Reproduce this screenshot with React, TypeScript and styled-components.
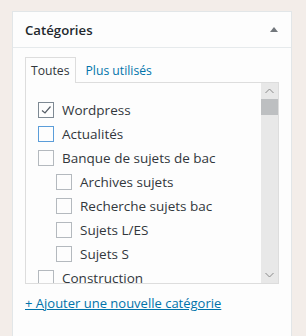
import styled, { createGlobalStyle } from "styled-components";

const GlobalStyle = createGlobalStyle`
  body {
    margin: 0;
    background: #f3ede9;
    font-family: "Open Sans", "Noto Sans", sans-serif;
    color: #32373c;
  }
`;

const Page = styled.div`
  padding: 11px 14px 0 12px;
  height: 336px;
  box-sizing: border-box;
  overflow: hidden;
`;

const Panel = styled.div`
  width: 280px;
  height: 340px;
  box-sizing: border-box;
  background: #fdfdfd;
  border: 1px solid #e2e6e8;
`;

const Header = styled.div`
  display: flex;
  align-items: center;
  justify-content: space-between;
  height: 35px;
  padding: 0 13px 0 12px;
  border-bottom: 1px solid #e6eaec;
`;

const Title = styled.h2`
  margin: 0;
  font-size: 13.2px;
  font-weight: 600;
  color: #23282d;
`;

const Toggle = styled.span`
  width: 0;
  height: 0;
  border-left: 4px solid transparent;
  border-right: 4px solid transparent;
  border-bottom: 5px solid #72777c;
`;

const Body = styled.div`
  padding: 9px 12px 0 12px;
`;

const Tabs = styled.div`
  display: flex;
  align-items: flex-end;
`;

const Tab = styled.div<{ $active?: boolean }>`
  height: 26px;
  box-sizing: border-box;
  padding: 0 5px;
  display: flex;
  align-items: center;
  font-size: 12.2px;
  color: ${({ $active }) => ($active ? "#32373c" : "#0073aa")};
  border: 1px solid ${({ $active }) => ($active ? "#dddddd" : "transparent")};
  border-bottom: none;
  background: ${({ $active }) => ($active ? "#fdfdfd" : "transparent")};
  margin-bottom: -1px;
  margin-right: 4px;
`;

const ListBox = styled.div`
  display: flex;
  height: 202px;
  box-sizing: border-box;
  border: 1px solid #dddddd;
  background: #fdfdfd;
  width: 254px;
`;

const List = styled.ul`
  flex: 1;
  margin: 0;
  padding: 15px 0 0 12px;
  list-style: none;
  overflow: hidden;
`;

const Item = styled.li<{ $level?: number }>`
  display: flex;
  align-items: center;
  gap: 8px;
  height: 24px;
  padding-left: ${({ $level }) => ($level ?? 0) * 18}px;
  font-size: 13.5px;
  color: #32373c;
  white-space: nowrap;
`;

const Box = styled.span<{ $checked?: boolean; $focus?: boolean }>`
  flex: none;
  width: 16px;
  height: 16px;
  box-sizing: border-box;
  background: #fdfdfd;
  border: 1px solid
    ${({ $checked, $focus }) => ($focus ? "#5b9dd9" : $checked ? "#7e8993" : "#b4b9be")};
  display: flex;
  align-items: center;
  justify-content: center;
`;

const Scrollbar = styled.div`
  flex: none;
  width: 17px;
  background: #e8e8e8;
  display: flex;
  flex-direction: column;
`;

const Arrow = styled.div`
  height: 16px;
  display: flex;
  align-items: center;
  justify-content: center;
`;

const Thumb = styled.div`
  height: 16px;
  background: #bdbfc1;
`;

const Spacer = styled.div`
  flex: 1;
`;

const AddLink = styled.a`
  display: inline-block;
  margin-top: 10px;
  font-size: 13px;
  color: #0073aa;
  text-decoration: underline;
`;

const items = [
  { label: "Wordpress", level: 0, checked: true },
  { label: "Actualités", level: 0, focus: true },
  { label: "Banque de sujets de bac", level: 0 },
  { label: "Archives sujets", level: 1 },
  { label: "Recherche sujets bac", level: 1 },
  { label: "Sujets L/ES", level: 1 },
  { label: "Sujets S", level: 1 },
  { label: "Construction", level: 0 },
];

export default function App() {
  return (
    <>
      <GlobalStyle />
      <Page>
        <Panel>
          <Header>
            <Title>Catégories</Title>
            <Toggle />
          </Header>
          <Body>
            <Tabs>
              <Tab $active>Toutes</Tab>
              <Tab>Plus utilisés</Tab>
            </Tabs>
            <ListBox>
              <List>
                {items.map((it) => (
                  <Item key={it.label} $level={it.level}>
                    <Box $checked={it.checked} $focus={it.focus}>
                      {it.checked && (
                        <svg width="12" height="12" viewBox="0 0 12 12" fill="none" stroke="#555d66" strokeWidth="1.2">
                          <polyline points="2,6.5 5,9 10.5,2.5" />
                        </svg>
                      )}
                    </Box>
                    {it.label}
                  </Item>
                ))}
              </List>
              <Scrollbar>
                <Arrow>
                  <svg width="9" height="6" viewBox="0 0 9 6" fill="none" stroke="#8a8a8a" strokeWidth="1">
                    <polyline points="0.5,5 4.5,1 8.5,5" />
                  </svg>
                </Arrow>
                <Thumb />
                <Spacer />
                <Arrow>
                  <svg width="9" height="6" viewBox="0 0 9 6" fill="none" stroke="#8a8a8a" strokeWidth="1">
                    <polyline points="0.5,1 4.5,5 8.5,1" />
                  </svg>
                </Arrow>
              </Scrollbar>
            </ListBox>
            <AddLink href="#">+ Ajouter une nouvelle catégorie</AddLink>
          </Body>
        </Panel>
      </Page>
    </>
  );
}
